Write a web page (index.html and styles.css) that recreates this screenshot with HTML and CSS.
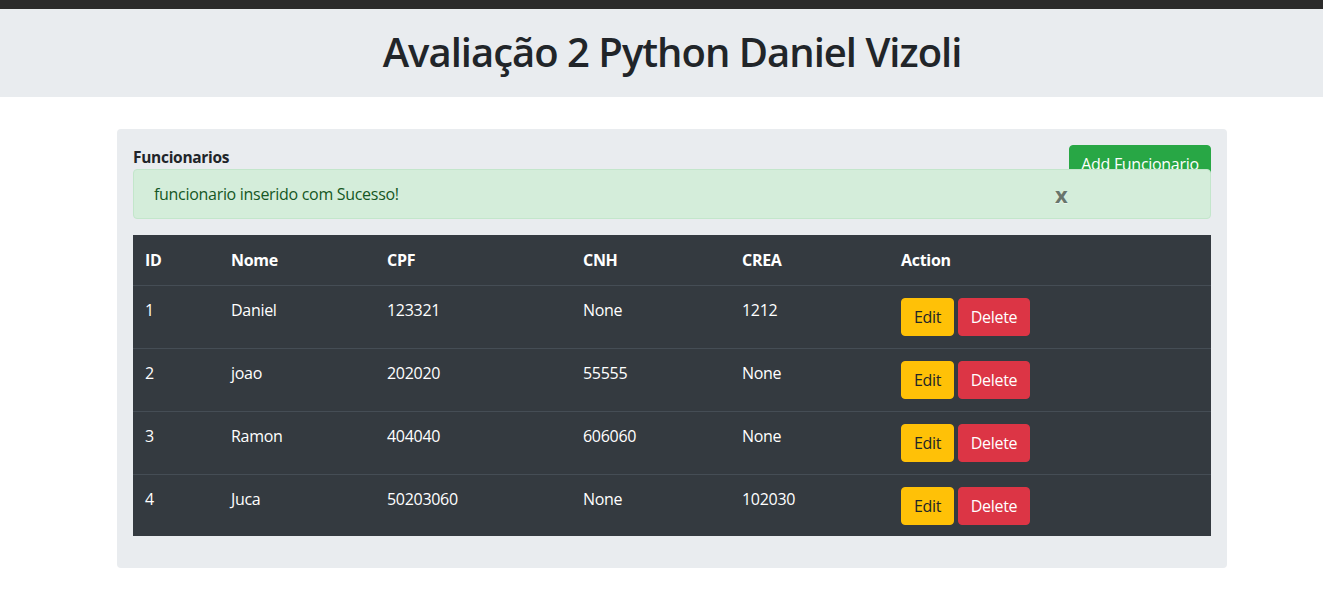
FILE: index.html
```html
<!DOCTYPE html>
<html lang="pt">
<head>
<meta charset="utf-8">
<title>Avaliação 2 Python Daniel Vizoli</title>
<link rel="stylesheet" href="styles.css">
</head>
<body>
<div class="topbar"></div>
<div class="page">
  <header class="jumbotron">
    <h1 class="title">Avaliação 2 Python Daniel Vizoli</h1>
  </header>
  <main class="container">
    <section class="panel">
      <div class="panel-head">
        <button class="btn btn-success add-btn">Add Funcionario</button>
        <h2 class="panel-title">Funcionarios</h2>
      </div>
      <div class="alert">
        funcionario inserido com Sucesso!
        <span class="close">x</span>
      </div>
      <table class="table">
        <thead>
          <tr>
            <th class="c-id">ID</th>
            <th class="c-nome">Nome</th>
            <th class="c-cpf">CPF</th>
            <th class="c-cnh">CNH</th>
            <th class="c-crea">CREA</th>
            <th class="c-act">Action</th>
          </tr>
        </thead>
        <tbody>
          <tr>
            <td>1</td><td>Daniel</td><td>123321</td><td>None</td><td>1212</td>
            <td><button class="btn btn-warning">Edit</button><button class="btn btn-danger">Delete</button></td>
          </tr>
          <tr>
            <td>2</td><td>joao</td><td>202020</td><td>55555</td><td>None</td>
            <td><button class="btn btn-warning">Edit</button><button class="btn btn-danger">Delete</button></td>
          </tr>
          <tr>
            <td>3</td><td>Ramon</td><td>404040</td><td>606060</td><td>None</td>
            <td><button class="btn btn-warning">Edit</button><button class="btn btn-danger">Delete</button></td>
          </tr>
          <tr>
            <td>4</td><td>Juca</td><td>50203060</td><td>None</td><td>102030</td>
            <td><button class="btn btn-warning">Edit</button><button class="btn btn-danger">Delete</button></td>
          </tr>
        </tbody>
      </table>
    </section>
  </main>
</div>
</body>
</html>
```
FILE: styles.css
```css
* { box-sizing: border-box; }

html, body {
  margin: 0;
  padding: 0;
}

body {
  font-family: "Open Sans", "Noto Sans", sans-serif;
  font-size: 16px;
  line-height: 1.5;
  color: #212529;
  background: #fff;
  overflow-x: hidden;
}

.topbar {
  height: 9px;
  background: #2b2b2b;
}

.page {
  width: 1344px;
}

.jumbotron {
  background: #e9ecef;
  padding: 19px 16px 21px;
}

.title {
  margin: 0;
  text-align: center;
  font-size: 40px;
  font-weight: 600;
  line-height: 48px;
  color: #212529;
  letter-spacing: -1px;
}

.container {
  width: 1110px;
  margin: 32px auto 0;
}

.panel {
  background: #e9ecef;
  border-radius: 4px;
  padding: 16px;
}

.panel-head {
  height: 24px;
}

.panel-title {
  margin: 0;
  font-size: 15.5px;
  font-weight: 700;
  line-height: 24px;
  letter-spacing: -0.3px;
}

.btn {
  display: inline-block;
  font-family: inherit;
  font-size: 16px;
  line-height: 24px;
  padding: 6px 12px;
  border: 1px solid transparent;
  border-radius: 4px;
  cursor: pointer;
  letter-spacing: -0.3px;
}

.add-btn {
  float: right;
  width: 142px;
  padding: 6px 0;
  text-align: center;
}

.btn-success {
  background: #28a745;
  border-color: #28a745;
  color: #fff;
}

.btn-warning {
  background: #ffc107;
  border-color: #ffc107;
  color: #212529;
  width: 53px;
  padding: 6px 0;
  text-align: center;
}

.btn-danger {
  background: #dc3545;
  border-color: #dc3545;
  color: #fff;
  width: 72px;
  padding: 6px 0;
  text-align: center;
  margin-left: 4px;
}

.alert {
  position: relative;
  background: #d4edda;
  border: 1px solid #c3e6cb;
  border-radius: 4px;
  color: #155724;
  padding: 12px 20px;
  line-height: 24px;
  margin-bottom: 16px;
  letter-spacing: -0.3px;
}

.close {
  position: absolute;
  top: 12px;
  left: 921px;
  font-size: 22px;
  font-weight: 700;
  line-height: 24px;
  color: #000;
  opacity: 0.5;
  text-shadow: 0 1px 0 #fff;
}

.table {
  width: 100%;
  border-collapse: collapse;
  background: #343a40;
  color: #fff;
  margin-bottom: 16px;
}

.table th,
.table td {
  text-align: left;
  vertical-align: top;
  padding: 12px;
  line-height: 24px;
  letter-spacing: -0.3px;
}

.table th {
  font-weight: 700;
  padding-top: 13px;
  padding-bottom: 13px;
}

.table td {
  border-top: 1px solid #454d55;
}

.table tr:last-child td {
  padding-bottom: 11px;
}

.table td:last-child {
  font-size: 0;
}

.c-id { width: 86px; }
.c-nome { width: 156px; }
.c-cpf { width: 196px; }
.c-cnh { width: 159px; }
.c-crea { width: 159px; }
.c-act { width: 322px; }
```
